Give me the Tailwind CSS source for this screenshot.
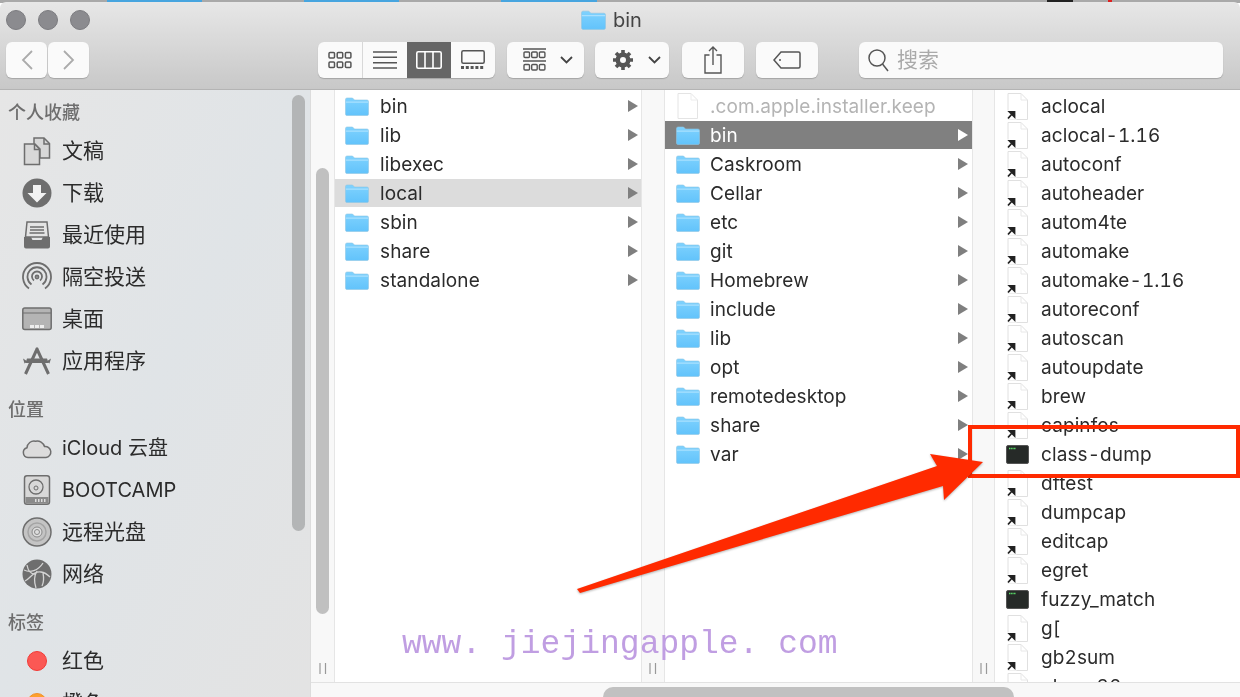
<!DOCTYPE html>
<html lang="zh">
<head>
<meta charset="UTF-8">
<title>bin</title>
<script src="https://cdn.jsdelivr.net/npm/@tailwindcss/browser@4"></script>
</head>
<body class="overflow-hidden bg-white">
<!-- shared icons -->
<svg class="absolute w-0 h-0">
  <defs>
    <linearGradient id="fg" x1="0" y1="0" x2="0" y2="1"><stop offset="0" stop-color="#7fd2fe"/><stop offset="1" stop-color="#62c3fb"/></linearGradient>
    <symbol id="folder" viewBox="0 0 24 19">
      <path d="M.5 2.500A1.500 1.500 0 0 1 2 1h5.500l2 2H22a1.500 1.500 0 0 1 1.500 1.500v12.500A1.500 1.500 0 0 1 22 18.500H2A1.500 1.500 0 0 1 .5 17z" fill="url(#fg)" stroke="#8fc6e4" stroke-width=".6"/>
      <path d="M.8 5.200h22.400" stroke="#a9e0fe" stroke-width="1.200"/>
    </symbol>
    <symbol id="tri" viewBox="0 0 10 12"><path d="M0 0l10 6-10 6z" fill="currentColor"/></symbol>
    <symbol id="file" viewBox="0 0 21 26">
      <path d="M1 .5h13l6.500 6.500v18.500H1z" fill="#fff" stroke="#e4e4e4"/><path d="M14 .5V7h6.500" fill="none" stroke="#ececec"/>
    </symbol>
    <symbol id="alias" viewBox="0 0 22 27">
      <path d="M2 .5h13l6.500 6.500v19.500H2z" fill="#fff" stroke="#e0e0e0"/><path d="M15 .5V7h6.500" fill="none" stroke="#e8e8e8"/>
      <path d="M.5 17.500h10v9H.5z" fill="#fff"/>
      <path d="M2 25.500l4.500-5M3.500 18.800h5v5z" stroke="#222" stroke-width="1.800" fill="#222"/>
    </symbol>
    <symbol id="term" viewBox="0 0 23 19">
      <rect x=".5" y=".5" width="22" height="18" rx="1.500" fill="#262a28" stroke="#555"/>
      <path d="M3 3.500h7" stroke="#5be06a" stroke-width="1.400" stroke-dasharray="1.200 .5"/>
    </symbol>
    <symbol id="handle" viewBox="0 0 8 11"><path d="M1 0v11M6.500 0v11" stroke="#999" stroke-width="1.200"/></symbol>
  </defs>
</svg>

<div class="blur-[0.35px]">
<!-- desktop strip behind the window -->
<div class="flex h-[3px] bg-[#a9a9a9]">
  <span class="ml-[107px] w-[95px] bg-[#47a5df]"></span>
  <span class="ml-[102px] w-[95px] bg-[#47a5df]"></span>
  <span class="ml-[102px] w-[96px] bg-[#47a5df]"></span>
  <span class="ml-[450px] w-[26px] bg-[#222]"></span>
  <span class="ml-[35px] w-[4px] bg-[#e02020]"></span>
</div>

<div class="flex flex-col h-[695px] -mt-px rounded-t-[6px] overflow-hidden relative text-[#2b2b2b] font-['Inter','Noto_Sans_CJK_SC',sans-serif]">
  <!-- toolbar -->
  <header class="h-[88px] shrink-0 bg-gradient-to-b from-[#e7e7e7] to-[#c8c8c8] border-b border-[#b4b4b4]">
    <div class="flex items-center h-[36px] pl-[6px]">
      <span class="w-[20px] h-[20px] rounded-full bg-[#8b8b8f] border border-[#7c7c80]"></span>
      <span class="w-[20px] h-[20px] rounded-full bg-[#8b8b8f] border border-[#7c7c80] ml-[12px]"></span>
      <span class="w-[20px] h-[20px] rounded-full bg-[#8b8b8f] border border-[#7c7c80] ml-[12px]"></span>
      <svg class="w-[25px] h-[20px] ml-[491px]"><use href="#folder"/></svg>
      <span class="ml-[7px] text-[20px] text-[#444]">bin</span>
    </div>
    <div class="flex items-center h-[36px] mt-[4px] pl-[6px]">
      <div class="flex gap-px">
        <button class="w-[41px] h-[36px] flex items-center justify-center rounded-[6px] bg-[#fafafa] shadow-[0_1px_1px_#a5a5a5]">
          <svg class="w-[12px] h-[20px]" viewBox="0 0 12 20"><path d="M11 1L2 10l9 9" fill="none" stroke="#ababab" stroke-width="1.800"/></svg>
        </button>
        <button class="w-[41px] h-[36px] flex items-center justify-center rounded-[6px] bg-[#fafafa] shadow-[0_1px_1px_#a5a5a5]">
          <svg class="w-[12px] h-[20px]" viewBox="0 0 12 20"><path d="M1 1l9 9-9 9" fill="none" stroke="#ababab" stroke-width="1.800"/></svg>
        </button>
      </div>
      <!-- view switch -->
      <div class="flex ml-[229px] h-[36px] rounded-[6px] bg-[#fafafa] shadow-[0_1px_1px_#a5a5a5] overflow-hidden">
        <div class="w-[45px] flex items-center justify-center border-r border-[#d8d8d8]">
          <svg class="w-[24px] h-[18px]" viewBox="0 0 24 18" fill="none" stroke="#555" stroke-width="1.500">
            <rect x="1" y="1.500" width="5.500" height="5.500" rx="1"/><rect x="9.200" y="1.500" width="5.500" height="5.500" rx="1"/><rect x="17.400" y="1.500" width="5.500" height="5.500" rx="1"/>
            <rect x="1" y="11" width="5.500" height="5.500" rx="1"/><rect x="9.200" y="11" width="5.500" height="5.500" rx="1"/><rect x="17.400" y="11" width="5.500" height="5.500" rx="1"/>
          </svg>
        </div>
        <div class="w-[44px] flex items-center justify-center">
          <svg class="w-[24px] h-[20px]" viewBox="0 0 24 20" stroke="#555" stroke-width="1.600"><path d="M0 2h24M0 7.300h24M0 12.700h24M0 18h24"/></svg>
        </div>
        <div class="w-[44px] flex items-center justify-center bg-[#666]">
          <svg class="w-[26px] h-[18px]" viewBox="0 0 26 18" fill="none" stroke="#fff" stroke-width="1.600"><rect x=".8" y=".8" width="24.400" height="16.400" rx="1.500"/><path d="M9 1v16M17 1v16"/></svg>
        </div>
        <div class="w-[44px] flex items-center justify-center">
          <svg class="w-[24px] h-[20px]" viewBox="0 0 24 20" fill="none" stroke="#555" stroke-width="1.500"><rect x=".8" y=".8" width="22.400" height="12.400" rx="1.500"/><path d="M0 17.500h24" stroke-width="3" stroke-dasharray="3 1.800"/></svg>
        </div>
      </div>
      <!-- arrange -->
      <div class="flex items-center ml-[12px] w-[77px] h-[36px] pl-[16px] rounded-[6px] bg-[#fafafa] shadow-[0_1px_1px_#a5a5a5]">
        <svg class="w-[23px] h-[24px]" viewBox="0 0 23 24" fill="none" stroke="#555" stroke-width="1.400">
          <path d="M0 1h23M0 13h23"/><rect x="1" y="4" width="5.500" height="5.500" rx="1"/><rect x="8.700" y="4" width="5.500" height="5.500" rx="1"/><rect x="16.400" y="4" width="5.500" height="5.500" rx="1"/>
          <rect x="1" y="16.500" width="5.500" height="5.500" rx="1"/><rect x="8.700" y="16.500" width="5.500" height="5.500" rx="1"/><rect x="16.400" y="16.500" width="5.500" height="5.500" rx="1"/>
        </svg>
        <svg class="w-[13px] h-[8px] ml-[14px]" viewBox="0 0 13 8"><path d="M1 1l5.500 5.500L12 1" fill="none" stroke="#444" stroke-width="1.800"/></svg>
      </div>
      <!-- action -->
      <div class="flex items-center ml-[11px] w-[74px] h-[36px] pl-[16px] rounded-[6px] bg-[#fafafa] shadow-[0_1px_1px_#a5a5a5]">
        <svg class="w-[24px] h-[24px]" viewBox="0 0 24 24">
          <path d="M12 4.500a7.500 7.500 0 1 0 0 15 7.500 7.500 0 0 0 0-15zm0 4.500a3 3 0 1 1 0 6 3 3 0 0 1 0-6z" fill="#555" fill-rule="evenodd"/>
          <path d="M12 6V2M12 22v-4M6 12H2M22 12h-4M7.800 7.800L5 5M19 19l-2.800-2.800M16.200 7.800L19 5M5 19l2.800-2.800" stroke="#555" stroke-width="3.600"/>
        </svg>
        <svg class="w-[13px] h-[8px] ml-[13px]" viewBox="0 0 13 8"><path d="M1 1l5.500 5.500L12 1" fill="none" stroke="#444" stroke-width="1.800"/></svg>
      </div>
      <!-- share -->
      <button class="flex items-center justify-center ml-[13px] w-[62px] h-[36px] rounded-[6px] bg-[#fafafa] shadow-[0_1px_1px_#a5a5a5]">
        <svg class="w-[18px] h-[28px]" viewBox="0 0 18 28" fill="none" stroke="#555" stroke-width="1.400"><path d="M5.500 9H1v18h16V9h-4.500M9 19V1.500M5 5l4-4 4 4"/></svg>
      </button>
      <!-- tag -->
      <button class="flex items-center justify-center ml-[12px] w-[62px] h-[36px] rounded-[6px] bg-[#fafafa] shadow-[0_1px_1px_#a5a5a5]">
        <svg class="w-[28px] h-[18px]" viewBox="0 0 28 18" fill="none" stroke="#555" stroke-width="1.500"><path d="M8 1h17.500a1.500 1.500 0 0 1 1.500 1.500v13a1.500 1.500 0 0 1-1.500 1.500H8L1 9z"/><circle cx="7" cy="9" r="1" fill="#555" stroke="none"/></svg>
      </button>
      <!-- search -->
      <div class="flex items-center ml-[41px] w-[364px] h-[36px] pl-[9px] rounded-[6px] bg-[#fafafa] shadow-[0_1px_1px_#a5a5a5]">
        <svg class="w-[21px] h-[23px]" viewBox="0 0 21 23" fill="none" stroke="#555" stroke-width="1.500"><circle cx="9" cy="9" r="8"/><path d="M14.500 15l5.500 7"/></svg>
        <span class="ml-[8px] text-[21px] text-[#aaa]">搜索</span>
      </div>
    </div>
  </header>

  <div class="flex flex-1 min-h-0">
    <!-- sidebar -->
    <aside class="relative w-[311px] shrink-0 overflow-hidden pt-[11px] border-r border-[#dcdcdc] bg-gradient-to-br from-[#e6e6e6] via-[#e0e4e7] to-[#e3e3e3] text-[21px]">
      <div class="absolute left-[292px] top-[5px] w-[13px] h-[436px] rounded-full bg-[#b3b5b6]"></div>
      <h3 class="h-[24px] pl-[8px] text-[18px] leading-[24px] font-medium text-[#6e6e6e]">个人收藏</h3>
      <ul class="mt-[5px]">
        <li class="flex items-center h-[42px] pl-[22px]">
          <svg class="w-[30px] h-[30px] mr-[10px]" viewBox="0 0 30 30" fill="#d8d8d8" stroke="#6e6e6e" stroke-width="1.500"><path d="M2.500 8h10l5 5v15.500h-15zM12 2h10l5.500 5.500V22H18V13l-5-5h-1z"/><path d="M22 2v6h5.500M12.500 8v5.500h5" fill="none"/></svg>
          <span>文稿</span>
        </li>
        <li class="flex items-center h-[42px] pl-[22px]">
          <svg class="w-[30px] h-[30px] mr-[10px]" viewBox="0 0 30 30"><circle cx="15" cy="15" r="14.500" fill="#6e6e6e"/><path d="M11 7h8v8h5.500L15 24.500 5.500 15H11z" fill="#f2f2f2"/></svg>
          <span>下载</span>
        </li>
        <li class="flex items-center h-[42px] pl-[22px]">
          <svg class="w-[30px] h-[30px] mr-[10px]" viewBox="0 0 30 30"><path d="M5 2h20l1.500 15h-23z" fill="#e4e4e4" stroke="#6e6e6e" stroke-width="1.500"/><path d="M8 7h14M8 10h14M7.500 13h15" stroke="#6e6e6e" stroke-width="1.300"/><path d="M2 17h7l1.500 3h9l1.500-3h7v9.500a2 2 0 0 1-2 2H4a2 2 0 0 1-2-2z" fill="#6e6e6e"/></svg>
          <span>最近使用</span>
        </li>
        <li class="flex items-center h-[42px] pl-[22px]">
          <svg class="w-[30px] h-[30px] mr-[10px]" viewBox="0 0 30 30" fill="none" stroke="#6e6e6e" stroke-width="1.800"><path d="M7 26.500a14 14 0 1 1 16 0M9.500 22.500a9.500 9.500 0 1 1 11 0M12 18.500a5 5 0 1 1 6 0"/><circle cx="15" cy="15" r="1.500"/></svg>
          <span>隔空投送</span>
        </li>
        <li class="flex items-center h-[42px] pl-[22px]">
          <svg class="w-[30px] h-[30px] mr-[10px]" viewBox="0 0 30 30"><rect x=".8" y="4" width="28.400" height="21.500" rx="2" fill="#b4b4b4" stroke="#6e6e6e" stroke-width="1.500"/><path d="M1 9h28" stroke="#6e6e6e" stroke-width="1.200"/><path d="M8 21h4v3H8zM13 21h4v3h-4zM18 21h4v3h-4z" fill="#eee"/></svg>
          <span>桌面</span>
        </li>
        <li class="flex items-center h-[42px] pl-[22px]">
          <svg class="w-[30px] h-[30px] mr-[10px]" viewBox="0 0 30 30" fill="none" stroke="#6e6e6e"><path d="M15.500 2L3.500 28M14.500 2L26.500 28" stroke-width="3"/><path d="M1 12.500l4.500 3-3 2zM29 12.500l-4.500 3 3 2z" fill="#6e6e6e" stroke="none"/><path d="M5 12.500h20l1.500 4.500h-23z" fill="#6e6e6e" stroke="none"/></svg>
          <span>应用程序</span>
        </li>
      </ul>
      <h3 class="mt-[16px] h-[24px] pl-[8px] text-[18px] leading-[24px] font-medium text-[#6e6e6e]">位置</h3>
      <ul class="mt-[5px]">
        <li class="flex items-center h-[42px] pl-[22px]">
          <svg class="w-[30px] h-[30px] mr-[10px]" viewBox="0 0 30 30"><path d="M6 24.500a5 5 0 0 1-1-9.800 7 7 0 0 1 8.500-6.500 7.500 7.500 0 0 1 9 5.300 5.500 5.500 0 0 1 1.500 11z" fill="#dcdcdc" stroke="#6e6e6e" stroke-width="1.500"/></svg>
          <span class="text-[20px]">iCloud 云盘</span>
        </li>
        <li class="flex items-center h-[42px] pl-[22px]">
          <svg class="w-[30px] h-[30px] mr-[10px]" viewBox="0 0 30 30"><rect x="2.500" y=".8" width="25" height="28.400" rx="2.500" fill="#d8d8d8" stroke="#6e6e6e" stroke-width="1.500"/><circle cx="14" cy="12" r="7" fill="none" stroke="#6e6e6e" stroke-width="1.300"/><circle cx="14" cy="13" r="2" fill="none" stroke="#6e6e6e"/><rect x="3.500" y="22" width="23" height="6.500" fill="#8a8a8a"/><path d="M13 24h1.500v3H13zM16 24h1.500v3H16zM19 24h1.500v3H19zM22 24h1.500v3H22z" fill="#ddd"/></svg>
          <span class="text-[20px]">BOOTCAMP</span>
        </li>
        <li class="flex items-center h-[42px] pl-[22px]">
          <svg class="w-[30px] h-[30px] mr-[10px]" viewBox="0 0 30 30" fill="none"><circle cx="15" cy="15" r="14" fill="#c4c4c4" stroke="#6e6e6e" stroke-width="1.500"/><circle cx="15" cy="15" r="9" stroke="#a5a5a5" stroke-width="1.500"/><circle cx="15" cy="15" r="5" fill="#dedede" stroke="#8a8a8a"/><circle cx="15" cy="15" r="2.500" stroke="#8a8a8a"/></svg>
          <span>远程光盘</span>
        </li>
        <li class="flex items-center h-[42px] pl-[22px]">
          <svg class="w-[30px] h-[30px] mr-[10px]" viewBox="0 0 30 30" fill="none"><circle cx="15" cy="15" r="14.500" fill="#6e6e6e"/><path d="M2 11c6 3 14 1 19-7M3 22c6-3 8-10 16-9 4 .5 7 3 9 5M15 12c-3 5-3 11-1 17M21 14c1 5 1 9-1 13M5 6c1 6 3 9 8 9" stroke="#d4d4d4" stroke-width="1.300"/></svg>
          <span>网络</span>
        </li>
      </ul>
      <h3 class="mt-[16px] h-[24px] pl-[8px] text-[18px] leading-[24px] font-medium text-[#6e6e6e]">标签</h3>
      <ul class="mt-[5px]">
        <li class="flex items-center h-[42px] pl-[27px]">
          <span class="w-[20px] h-[20px] mr-[15px] rounded-full bg-[#fb5854] border border-[#f23a36]"></span>
          <span>红色</span>
        </li>
        <li class="flex items-center h-[42px] pl-[27px]">
          <span class="w-[20px] h-[20px] mr-[15px] rounded-full bg-[#fda02c] border border-[#f0902a]"></span>
          <span>橙色</span>
        </li>
      </ul>
    </aside>

    <!-- columns -->
    <div class="flex flex-col flex-1 min-w-0">
      <main class="flex flex-1 min-h-0 text-[19px] tracking-[0.1px] bg-white [&_span]:translate-y-px">
        <div class="flex flex-col items-center w-[24px] shrink-0 pt-[78px] pb-[8px] bg-[#f8f8f8] border-r border-[#e6e6e6]">
          <div class="w-[13px] h-[446px] rounded-full bg-[#c0c0c0]"></div>
          <svg class="w-[8px] h-[11px] mt-auto"><use href="#handle"/></svg>
        </div>
        <section class="w-[306px] shrink-0 pt-[2px]">
          <div class="flex items-center h-[28px] mb-px pl-[10px] pr-[3px]"><svg class="w-[24px] h-[19px] mr-[11px]"><use href="#folder"/></svg><span class="flex-1">bin</span><svg class="w-[10px] h-[12px] text-[#7f7f7f]"><use href="#tri"/></svg></div>
          <div class="flex items-center h-[28px] mb-px pl-[10px] pr-[3px]"><svg class="w-[24px] h-[19px] mr-[11px]"><use href="#folder"/></svg><span class="flex-1">lib</span><svg class="w-[10px] h-[12px] text-[#7f7f7f]"><use href="#tri"/></svg></div>
          <div class="flex items-center h-[28px] mb-px pl-[10px] pr-[3px]"><svg class="w-[24px] h-[19px] mr-[11px]"><use href="#folder"/></svg><span class="flex-1">libexec</span><svg class="w-[10px] h-[12px] text-[#7f7f7f]"><use href="#tri"/></svg></div>
          <div class="flex items-center h-[28px] mb-px pl-[10px] pr-[3px] bg-[#dcdcdc]"><svg class="w-[24px] h-[19px] mr-[11px]"><use href="#folder"/></svg><span class="flex-1">local</span><svg class="w-[10px] h-[12px] text-[#7f7f7f]"><use href="#tri"/></svg></div>
          <div class="flex items-center h-[28px] mb-px pl-[10px] pr-[3px]"><svg class="w-[24px] h-[19px] mr-[11px]"><use href="#folder"/></svg><span class="flex-1">sbin</span><svg class="w-[10px] h-[12px] text-[#7f7f7f]"><use href="#tri"/></svg></div>
          <div class="flex items-center h-[28px] mb-px pl-[10px] pr-[3px]"><svg class="w-[24px] h-[19px] mr-[11px]"><use href="#folder"/></svg><span class="flex-1">share</span><svg class="w-[10px] h-[12px] text-[#7f7f7f]"><use href="#tri"/></svg></div>
          <div class="flex items-center h-[28px] mb-px pl-[10px] pr-[3px]"><svg class="w-[24px] h-[19px] mr-[11px]"><use href="#folder"/></svg><span class="flex-1">standalone</span><svg class="w-[10px] h-[12px] text-[#7f7f7f]"><use href="#tri"/></svg></div>
        </section>
        <div class="flex flex-col items-center justify-end w-[24px] shrink-0 pb-[8px] bg-[#f8f8f8] border-x border-[#e6e6e6]">
          <svg class="w-[8px] h-[11px]"><use href="#handle"/></svg>
        </div>
        <section class="w-[307px] shrink-0 pt-[2px]">
          <div class="flex items-center h-[28px] mb-px pl-[12px] pr-[4px] text-[#b4b4b4]"><svg class="w-[21px] h-[26px] mr-[12px]"><use href="#file"/></svg><span class="flex-1">.com.apple.installer.keep</span></div>
          <div class="flex items-center h-[28px] mb-px pl-[11px] pr-[4px] bg-[#808080] text-white"><svg class="w-[24px] h-[19px] mr-[10px]"><use href="#folder"/></svg><span class="flex-1">bin</span><svg class="w-[10px] h-[12px]"><use href="#tri"/></svg></div>
          <div class="flex items-center h-[28px] mb-px pl-[11px] pr-[4px]"><svg class="w-[24px] h-[19px] mr-[10px]"><use href="#folder"/></svg><span class="flex-1">Caskroom</span><svg class="w-[10px] h-[12px] text-[#7f7f7f]"><use href="#tri"/></svg></div>
          <div class="flex items-center h-[28px] mb-px pl-[11px] pr-[4px]"><svg class="w-[24px] h-[19px] mr-[10px]"><use href="#folder"/></svg><span class="flex-1">Cellar</span><svg class="w-[10px] h-[12px] text-[#7f7f7f]"><use href="#tri"/></svg></div>
          <div class="flex items-center h-[28px] mb-px pl-[11px] pr-[4px]"><svg class="w-[24px] h-[19px] mr-[10px]"><use href="#folder"/></svg><span class="flex-1">etc</span><svg class="w-[10px] h-[12px] text-[#7f7f7f]"><use href="#tri"/></svg></div>
          <div class="flex items-center h-[28px] mb-px pl-[11px] pr-[4px]"><svg class="w-[24px] h-[19px] mr-[10px]"><use href="#folder"/></svg><span class="flex-1">git</span><svg class="w-[10px] h-[12px] text-[#7f7f7f]"><use href="#tri"/></svg></div>
          <div class="flex items-center h-[28px] mb-px pl-[11px] pr-[4px]"><svg class="w-[24px] h-[19px] mr-[10px]"><use href="#folder"/></svg><span class="flex-1">Homebrew</span><svg class="w-[10px] h-[12px] text-[#7f7f7f]"><use href="#tri"/></svg></div>
          <div class="flex items-center h-[28px] mb-px pl-[11px] pr-[4px]"><svg class="w-[24px] h-[19px] mr-[10px]"><use href="#folder"/></svg><span class="flex-1">include</span><svg class="w-[10px] h-[12px] text-[#7f7f7f]"><use href="#tri"/></svg></div>
          <div class="flex items-center h-[28px] mb-px pl-[11px] pr-[4px]"><svg class="w-[24px] h-[19px] mr-[10px]"><use href="#folder"/></svg><span class="flex-1">lib</span><svg class="w-[10px] h-[12px] text-[#7f7f7f]"><use href="#tri"/></svg></div>
          <div class="flex items-center h-[28px] mb-px pl-[11px] pr-[4px]"><svg class="w-[24px] h-[19px] mr-[10px]"><use href="#folder"/></svg><span class="flex-1">opt</span><svg class="w-[10px] h-[12px] text-[#7f7f7f]"><use href="#tri"/></svg></div>
          <div class="flex items-center h-[28px] mb-px pl-[11px] pr-[4px]"><svg class="w-[24px] h-[19px] mr-[10px]"><use href="#folder"/></svg><span class="flex-1">remotedesktop</span><svg class="w-[10px] h-[12px] text-[#7f7f7f]"><use href="#tri"/></svg></div>
          <div class="flex items-center h-[28px] mb-px pl-[11px] pr-[4px]"><svg class="w-[24px] h-[19px] mr-[10px]"><use href="#folder"/></svg><span class="flex-1">share</span><svg class="w-[10px] h-[12px] text-[#7f7f7f]"><use href="#tri"/></svg></div>
          <div class="flex items-center h-[28px] mb-px pl-[11px] pr-[4px]"><svg class="w-[24px] h-[19px] mr-[10px]"><use href="#folder"/></svg><span class="flex-1">var</span><svg class="w-[10px] h-[12px] text-[#7f7f7f]"><use href="#tri"/></svg></div>
        </section>
        <div class="flex flex-col items-center justify-end w-[23px] shrink-0 pb-[8px] bg-[#f8f8f8] border-x border-[#e6e6e6]">
          <svg class="w-[8px] h-[11px]"><use href="#handle"/></svg>
        </div>
        <section class="flex-1 min-w-0 pt-[2px] overflow-hidden tabular-nums">
          <div class="flex items-center h-[28px] mb-px pl-[11px]"><svg class="w-[22px] h-[27px] mr-[13px]"><use href="#alias"/></svg><span>aclocal</span></div>
          <div class="flex items-center h-[28px] mb-px pl-[11px]"><svg class="w-[22px] h-[27px] mr-[13px]"><use href="#alias"/></svg><span>aclocal-1.16</span></div>
          <div class="flex items-center h-[28px] mb-px pl-[11px]"><svg class="w-[22px] h-[27px] mr-[13px]"><use href="#alias"/></svg><span>autoconf</span></div>
          <div class="flex items-center h-[28px] mb-px pl-[11px]"><svg class="w-[22px] h-[27px] mr-[13px]"><use href="#alias"/></svg><span>autoheader</span></div>
          <div class="flex items-center h-[28px] mb-px pl-[11px]"><svg class="w-[22px] h-[27px] mr-[13px]"><use href="#alias"/></svg><span>autom4te</span></div>
          <div class="flex items-center h-[28px] mb-px pl-[11px]"><svg class="w-[22px] h-[27px] mr-[13px]"><use href="#alias"/></svg><span>automake</span></div>
          <div class="flex items-center h-[28px] mb-px pl-[11px]"><svg class="w-[22px] h-[27px] mr-[13px]"><use href="#alias"/></svg><span>automake-1.16</span></div>
          <div class="flex items-center h-[28px] mb-px pl-[11px]"><svg class="w-[22px] h-[27px] mr-[13px]"><use href="#alias"/></svg><span>autoreconf</span></div>
          <div class="flex items-center h-[28px] mb-px pl-[11px]"><svg class="w-[22px] h-[27px] mr-[13px]"><use href="#alias"/></svg><span>autoscan</span></div>
          <div class="flex items-center h-[28px] mb-px pl-[11px]"><svg class="w-[22px] h-[27px] mr-[13px]"><use href="#alias"/></svg><span>autoupdate</span></div>
          <div class="flex items-center h-[28px] mb-px pl-[11px]"><svg class="w-[22px] h-[27px] mr-[13px]"><use href="#alias"/></svg><span>brew</span></div>
          <div class="flex items-center h-[28px] mb-px pl-[11px]"><svg class="w-[22px] h-[27px] mr-[13px]"><use href="#alias"/></svg><span>capinfos</span></div>
          <div class="flex items-center h-[28px] mb-px pl-[11px]"><svg class="w-[23px] h-[19px] mr-[12px]"><use href="#term"/></svg><span>class-dump</span></div>
          <div class="flex items-center h-[28px] mb-px pl-[11px]"><svg class="w-[22px] h-[27px] mr-[13px]"><use href="#alias"/></svg><span>dftest</span></div>
          <div class="flex items-center h-[28px] mb-px pl-[11px]"><svg class="w-[22px] h-[27px] mr-[13px]"><use href="#alias"/></svg><span>dumpcap</span></div>
          <div class="flex items-center h-[28px] mb-px pl-[11px]"><svg class="w-[22px] h-[27px] mr-[13px]"><use href="#alias"/></svg><span>editcap</span></div>
          <div class="flex items-center h-[28px] mb-px pl-[11px]"><svg class="w-[22px] h-[27px] mr-[13px]"><use href="#alias"/></svg><span>egret</span></div>
          <div class="flex items-center h-[28px] mb-px pl-[11px]"><svg class="w-[23px] h-[19px] mr-[12px]"><use href="#term"/></svg><span>fuzzy_match</span></div>
          <div class="flex items-center h-[28px] mb-px pl-[11px]"><svg class="w-[22px] h-[27px] mr-[13px]"><use href="#alias"/></svg><span>g[</span></div>
          <div class="flex items-center h-[28px] mb-px pl-[11px]"><svg class="w-[22px] h-[27px] mr-[13px]"><use href="#alias"/></svg><span>gb2sum</span></div>
          <div class="flex items-center h-[28px] mb-px pl-[11px]"><svg class="w-[22px] h-[27px] mr-[13px]"><use href="#alias"/></svg><span>gbase32</span></div>
        </section>
      </main>
      <!-- bottom scrollbar -->
      <div class="h-[15px] shrink-0 pt-[4px] bg-[#f8f8f8] border-t border-[#e2e2e2]">
        <div class="ml-[292px] w-[411px] h-[10px] rounded-t-full bg-[#c1c1c1]"></div>
      </div>
    </div>
  </div>
</div>

<!-- annotations drawn over the screenshot -->
<div class="absolute left-[968px] top-[425px] w-[272px] h-[53px] border-[4px] border-[#ff2a00]"></div>
<svg class="absolute left-0 top-0 w-[1240px] h-[697px] pointer-events-none drop-shadow-[0_1px_1px_rgba(0,0,0,0.3)]" viewBox="0 0 1240 697">
  <path d="M577 589L937 466 930 454 983 462 944 500 943 486 580 593z" fill="#ff2a00"/>
</svg>
<div class="absolute left-[402px] top-[625px] font-['Liberation_Mono',monospace] text-[33px] leading-[40px] text-[#c09ee2] whitespace-pre">www. jiejingapple. com</div>
</div>
</body>
</html>
